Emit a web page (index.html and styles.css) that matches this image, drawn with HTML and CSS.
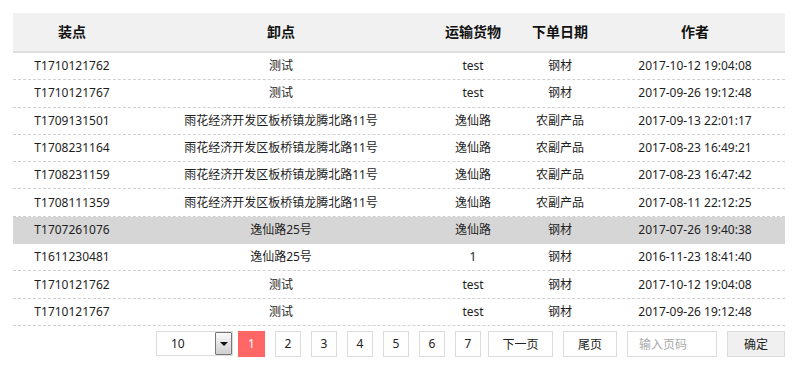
FILE: index.html
```html
<!DOCTYPE html>
<html lang="zh">
<head>
<meta charset="utf-8">
<title>订单列表</title>
<link rel="stylesheet" href="styles.css">
</head>
<body>
<div class="page">
  <div class="grid">
    <div class="row head">
      <div class="cell">装点</div>
      <div class="cell">卸点</div>
      <div class="cell">运输货物</div>
      <div class="cell">下单日期</div>
      <div class="cell">作者</div>
    </div>
    <div class="row"><div class="cell">T1710121762</div><div class="cell">测试</div><div class="cell">test</div><div class="cell">钢材</div><div class="cell">2017-10-12 19:04:08</div></div>
    <div class="row"><div class="cell">T1710121767</div><div class="cell">测试</div><div class="cell">test</div><div class="cell">钢材</div><div class="cell">2017-09-26 19:12:48</div></div>
    <div class="row"><div class="cell">T1709131501</div><div class="cell">雨花经济开发区板桥镇龙腾北路11号</div><div class="cell">逸仙路</div><div class="cell">农副产品</div><div class="cell">2017-09-13 22:01:17</div></div>
    <div class="row"><div class="cell">T1708231164</div><div class="cell">雨花经济开发区板桥镇龙腾北路11号</div><div class="cell">逸仙路</div><div class="cell">农副产品</div><div class="cell">2017-08-23 16:49:21</div></div>
    <div class="row"><div class="cell">T1708231159</div><div class="cell">雨花经济开发区板桥镇龙腾北路11号</div><div class="cell">逸仙路</div><div class="cell">农副产品</div><div class="cell">2017-08-23 16:47:42</div></div>
    <div class="row"><div class="cell">T1708111359</div><div class="cell">雨花经济开发区板桥镇龙腾北路11号</div><div class="cell">逸仙路</div><div class="cell">农副产品</div><div class="cell">2017-08-11 22:12:25</div></div>
    <div class="row active"><div class="cell">T1707261076</div><div class="cell">逸仙路25号</div><div class="cell">逸仙路</div><div class="cell">钢材</div><div class="cell">2017-07-26 19:40:38</div></div>
    <div class="row"><div class="cell">T1611230481</div><div class="cell">逸仙路25号</div><div class="cell">1</div><div class="cell">钢材</div><div class="cell">2016-11-23 18:41:40</div></div>
    <div class="row"><div class="cell">T1710121762</div><div class="cell">测试</div><div class="cell">test</div><div class="cell">钢材</div><div class="cell">2017-10-12 19:04:08</div></div>
    <div class="row"><div class="cell">T1710121767</div><div class="cell">测试</div><div class="cell">test</div><div class="cell">钢材</div><div class="cell">2017-09-26 19:12:48</div></div>
  </div>
  <div class="pager">
    <div class="size-select">
      <span class="size-value">10</span>
      <span class="size-btn"><span class="tri"></span></span>
    </div>
    <span class="pg current">1</span>
    <span class="pg">2</span>
    <span class="pg">3</span>
    <span class="pg">4</span>
    <span class="pg">5</span>
    <span class="pg">6</span>
    <span class="pg">7</span>
    <span class="pg wide-next">下一页</span>
    <span class="pg wide-last">尾页</span>
    <span class="pg-input">输入页码</span>
    <span class="pg-ok">确定</span>
  </div>
</div>
</body>
</html>
```
FILE: styles.css
```css
html, body {
  margin: 0;
  padding: 0;
  background: #fff;
}
body {
  font-family: "Noto Sans", "Noto Sans CJK SC", sans-serif;
  font-size: 12px;
  color: #1e1e1e;
}
.page {
  padding: 13px 15px 0 13px;
  width: 772px;
}
.grid {
  display: flex;
  flex-direction: column;
}
.row {
  display: grid;
  grid-template-columns: 118px 300px 84px 90px 180px;
  height: 27.3px;
  box-sizing: border-box;
  border-bottom: 1px dashed #d0d0d0;
  align-items: center;
}
.cell {
  text-align: center;
  line-height: 16px;
  white-space: nowrap;
}
.row.head {
  height: 40px;
  background: #f1f1f1;
  border-bottom: 2px solid #dedede;
  font-size: 14px;
  font-weight: bold;
  color: #111;
}
.row.active {
  background: #d6d6d6;
  border-bottom-color: #d6d6d6;
}
.pager {
  display: flex;
  justify-content: flex-end;
  align-items: center;
  margin-top: 5px;
  height: 26px;
}
.size-select {
  width: 77px;
  height: 25px;
  box-sizing: border-box;
  border: 1px solid #dcdcdc;
  display: flex;
  align-items: center;
  margin-right: 5px;
}
.size-value {
  flex: 1;
  padding-left: 14px;
  color: #222;
}
.size-btn {
  width: 17px;
  height: 23px;
  box-sizing: border-box;
  border: 1px solid #777;
  border-radius: 1px;
  background: linear-gradient(#fafafa, #cfcfcf);
  display: flex;
  align-items: center;
  justify-content: center;
}
.tri {
  width: 0;
  height: 0;
  border-left: 4px solid transparent;
  border-right: 4px solid transparent;
  border-top: 4px solid #111;
}
.pg {
  width: 26px;
  height: 26px;
  box-sizing: border-box;
  border: 1px solid #dcdcdc;
  display: flex;
  align-items: center;
  justify-content: center;
  margin-left: 10px;
  color: #222;
}
.pg.current {
  width: 27px;
  background: #ff6666;
  border-color: #ff6666;
  color: #fff;
  margin-left: 0;
}
.pg.wide-next {
  width: 65px;
  margin-left: 7px;
}
.pg.wide-last {
  width: 54px;
}
.pg-input {
  width: 90px;
  height: 26px;
  box-sizing: border-box;
  border: 1px solid #dcdcdc;
  margin-left: 10px;
  padding-left: 11px;
  display: flex;
  align-items: center;
  color: #aaa;
}
.pg-ok {
  width: 58px;
  height: 26px;
  box-sizing: border-box;
  border: 1px solid #dcdcdc;
  background: #f0f0f0;
  margin-left: 10px;
  display: flex;
  align-items: center;
  justify-content: center;
  color: #222;
}
```
